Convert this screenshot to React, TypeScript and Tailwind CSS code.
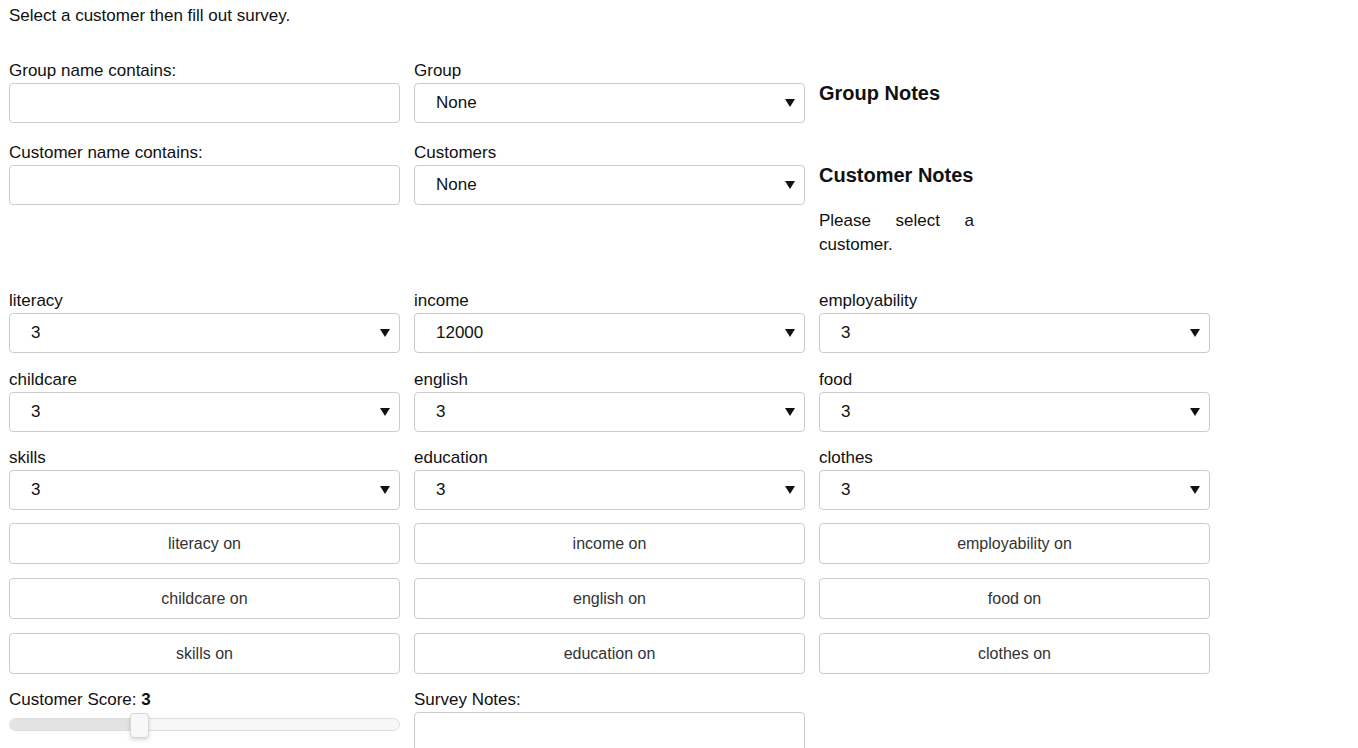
import React from "react";

const font = { fontFamily: '"Liberation Sans", Arial, sans-serif' };

function Arrow() {
  return (
    <svg
      className="pointer-events-none absolute right-[10px] top-1/2 -translate-y-1/2"
      width="10"
      height="8"
      viewBox="0 0 10 8"
    >
      <polygon points="0,0 10,0 5,8" fill="#111" />
    </svg>
  );
}

function Select({ value }: { value: string }) {
  return (
    <div className="relative h-[40px] w-full">
      <select
        defaultValue={value}
        className="h-full w-full appearance-none rounded-[4px] border border-[#cccccc] bg-white pl-[21px] pr-8 text-[17px] text-[#111] outline-none"
        style={font}
      >
        <option value={value}>{value}</option>
      </select>
      <Arrow />
    </div>
  );
}

function Field({ label, value }: { label: string; value: string }) {
  return (
    <div className="flex flex-col">
      <label className="text-[17px] leading-[24px] text-[#111]">{label}</label>
      <Select value={value} />
    </div>
  );
}

function TextField({ label }: { label: string }) {
  return (
    <div className="flex flex-col">
      <label className="text-[17px] leading-[24px] text-[#111]">{label}</label>
      <input
        type="text"
        className="h-[40px] w-full rounded-[4px] border border-[#cccccc] bg-white px-3 outline-none"
      />
    </div>
  );
}

function Toggle({ label }: { label: string }) {
  return (
    <button
      type="button"
      className="h-[41px] w-full rounded-[4px] border border-[#cccccc] bg-white text-[16px] text-[#333]"
      style={font}
    >
      {label}
    </button>
  );
}

export default function App() {
  const fields = [
    ["literacy", "3"],
    ["income", "12000"],
    ["employability", "3"],
    ["childcare", "3"],
    ["english", "3"],
    ["food", "3"],
    ["skills", "3"],
    ["education", "3"],
    ["clothes", "3"],
  ];
  const toggles = [
    "literacy on",
    "income on",
    "employability on",
    "childcare on",
    "english on",
    "food on",
    "skills on",
    "education on",
    "clothes on",
  ];
  return (
    <div className="min-h-screen bg-white pl-[9px] pt-[4px] text-[#111]" style={font}>
      <p className="text-[17px] leading-[24px]">Select a customer then fill out survey.</p>

      <div className="mt-[31px] grid w-[1201px] grid-cols-3 items-start gap-x-[14px]">
        <div className="flex flex-col gap-[18px]">
          <TextField label="Group name contains:" />
          <TextField label="Customer name contains:" />
        </div>
        <div className="flex flex-col gap-[18px]">
          <Field label="Group" value="None" />
          <Field label="Customers" value="None" />
        </div>
        <div className="flex flex-col pt-[22px]">
          <h3 className="text-[20px] font-bold leading-[24px]">Group Notes</h3>
          <h3 className="mt-[58px] text-[20px] font-bold leading-[24px]">Customer Notes</h3>
          <p className="mt-[22px] w-[155px] text-justify text-[17px] leading-[24px]">
            Please select a customer.
          </p>
        </div>
      </div>

      <div className="mt-[32px] grid w-[1201px] grid-cols-3 gap-x-[14px] gap-y-[14.5px]">
        {fields.map(([l, v]) => (
          <Field key={l} label={l} value={v} />
        ))}
      </div>

      <div className="mt-[13px] grid w-[1201px] grid-cols-3 gap-x-[14px] gap-y-[14px]">
        {toggles.map((t) => (
          <Toggle key={t} label={t} />
        ))}
      </div>

      <div className="mt-[14px] grid w-[1201px] grid-cols-3 gap-x-[14px]">
        <div className="flex flex-col">
          <div className="text-[17px] leading-[24px]">
            Customer Score: <b>3</b>
          </div>
          <div className="relative mt-[1px] h-[26px]">
            <div className="absolute left-0 right-0 top-[5px] flex h-[13px] overflow-hidden rounded-full border border-[#dddddd] bg-[#f7f7f7]">
              <div className="h-full w-[125px] bg-[#e3e3e3]" />
            </div>
            <div className="absolute left-[121px] top-0 h-[25px] w-[19px] rounded-[4px] border border-[#d6d6d6] bg-[#f8f8f8] shadow-[0_2px_4px_rgba(0,0,0,0.15)]" />
          </div>
        </div>
        <div className="flex flex-col">
          <label className="text-[17px] leading-[24px]">Survey Notes:</label>
          <textarea className="h-[80px] w-full resize-none rounded-[4px] border border-[#cccccc] bg-white outline-none" />
        </div>
        <div />
      </div>
    </div>
  );
}
